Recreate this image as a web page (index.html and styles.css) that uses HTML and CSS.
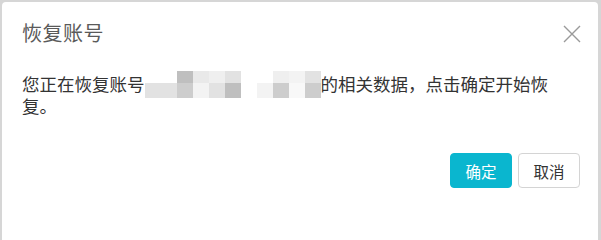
FILE: index.html
```html
<!DOCTYPE html>
<html lang="zh-CN">
<head>
<meta charset="utf-8">
<title>恢复账号</title>
<link rel="stylesheet" href="styles.css">
</head>
<body>
<div class="dialog">
  <div class="header">
    <div class="title">恢复账号</div>
    <button class="close" aria-label="关闭">
      <svg width="18" height="18" viewBox="0 0 18 18"><path d="M1 1 L17 17 M17 1 L1 17" stroke="#9a9a9a" stroke-width="1.4" fill="none"/></svg>
    </button>
  </div>
  <div class="body">
    <p class="msg">您正在恢复账号<span class="mosaic"><span class="tiles"><span class="row"><i class="w"></i><i class="w"></i><i class="g1"></i><i class="g4"></i><i class="g5"></i><i class="g3"></i><i class="w"></i><i class="w"></i><i class="g5"></i><i class="g6"></i><i class="g3"></i></span><span class="row"><i class="g3"></i><i class="g3"></i><i class="g2"></i><i class="g6"></i><i class="g3"></i><i class="g1"></i><i class="w"></i><i class="g6"></i><i class="g2"></i><i class="g7"></i><i class="g2"></i></span></span></span>的相关数据，点击确定开始恢复。</p>
  </div>
  <div class="footer">
    <button class="btn primary">确定</button>
    <button class="btn">取消</button>
  </div>
</div>
</body>
</html>
```
FILE: styles.css
```css
html {
  background: #d6d6d6;
  height: 100%;
  overflow: hidden;
}
html, body {
  margin: 0;
  padding: 0;
}
body {
  width: 601px;
  height: 100%;
  min-height: 205px;
  font-family: "Noto Sans CJK SC", "Noto Sans", sans-serif;
}
.dialog {
  margin: 2px 3px 0 2px;
  height: calc(100% - 2px);
  min-height: 203px;
  background: #fff;
  border-radius: 4px 4px 0 0;
  display: flex;
  flex-direction: column;
}
.header {
  display: flex;
  justify-content: space-between;
  align-items: center;
  padding: 17px 17px 0 20px;
  height: 28px;
}
.title {
  font-size: 20px;
  line-height: 28px;
  color: #5a5a5a;
  letter-spacing: 0.5px;
}
.close {
  border: 0;
  background: none;
  padding: 0;
  width: 18px;
  height: 18px;
  display: flex;
  cursor: pointer;
  margin-top: 2px;
}
.body {
  padding: 0 20px;
  margin-top: 26px;
}
.msg {
  margin: 0;
  width: 540px;
  font-size: 17.5px;
  line-height: 22px;
  color: #333;
}
.mosaic {
  display: inline-block;
  height: 22px;
  vertical-align: top;
}
.tiles {
  display: flex;
  flex-direction: column;
  margin-top: -2px;
}
.mosaic .row {
  display: flex;
}
.mosaic .row:first-child i { height: 12px; }
.mosaic .row:last-child i { height: 15px; }
.mosaic i {
  display: block;
  width: 16px;
}
.mosaic .w { background: #fff; }
.mosaic .g1 { background: #bfbfbf; }
.mosaic .g2 { background: #cdcdcd; }
.mosaic .g3 { background: #e2e2e2; }
.mosaic .g4 { background: #e9e9e9; }
.mosaic .g5 { background: #efefef; }
.mosaic .g6 { background: #f3f3f3; }
.mosaic .g7 { background: #f8f8f8; }
.footer {
  display: flex;
  justify-content: flex-end;
  gap: 6px;
  padding: 0 18px 0 0;
  margin-top: 36px;
}
.btn {
  width: 62px;
  height: 35px;
  border: 1px solid #d4d4d4;
  border-radius: 4px;
  background: #fff;
  color: #333;
  font-family: "Noto Sans CJK SC", "Noto Sans", sans-serif;
  font-size: 15.5px;
  padding: 0;
}
.btn.primary {
  background: #0ab6cf;
  border-color: #0ab6cf;
  color: #fff;
}
```
